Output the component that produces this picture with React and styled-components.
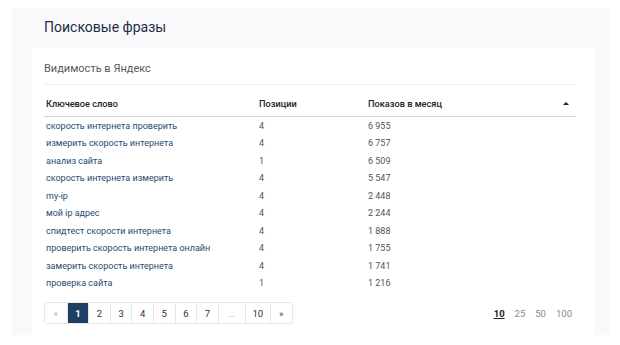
import React from "react";
import styled, { createGlobalStyle } from "styled-components";

const Global = createGlobalStyle`
  html, body { margin: 0; padding: 0; background: #ffffff; }
  body { font-family: Roboto, "Noto Sans", Arial, sans-serif; }
  * { box-sizing: border-box; }
`;

const Page = styled.div`
  width: 620px;
  height: 345px;
  padding: 8px 10px 10px 12px;
`;

const Panel = styled.div`
  background: #f9f9fb;
  height: 100%;
  display: flex;
  flex-direction: column;
`;

const Title = styled.h1`
  margin: 0;
  padding: 10px 0 0 32px;
  height: 40px;
  font-size: 14px;
  line-height: 18px;
  font-weight: 400;
  color: #1f2c44;
`;

const Card = styled.div`
  margin: 0 15px 0 20px;
  flex: 1;
  background: #ffffff;
  padding: 13px 19px 0 12px;
  display: flex;
  flex-direction: column;
`;

const Subtitle = styled.h2`
  margin: 0;
  font-size: 11px;
  line-height: 15px;
  font-weight: 400;
  color: #555b63;
  padding-bottom: 8px;
  border-bottom: 1px solid #eeeeee;
`;

const Table = styled.div`
  display: flex;
  flex-direction: column;
  margin-top: 10px;
`;

const Row = styled.div`
  display: grid;
  grid-template-columns: 213px 109px 1fr 20px;
  align-items: center;
  height: 17.5px;
  ${(p) => (p.$head ? "border-bottom: 1px solid #d6d6d6; height: 22px;" : "")}
`;

const HeadCell = styled.div`
  font-size: 9.2px;
  font-weight: 500;
  color: #222;
  padding-left: 2px;
  padding-bottom: 4px;
`;

const Cell = styled.div`
  font-size: 9px;
  color: ${(p) => (p.$link ? "#284b72" : "#555")};
  padding-left: 2px;
  white-space: nowrap;
`;

const SortArrow = styled.div`
  padding-bottom: 4px;
  display: flex;
  justify-content: center;
  &::before {
    content: "";
    border-left: 3px solid transparent;
    border-right: 3px solid transparent;
    border-bottom: 3px solid #222;
  }
`;

const Footer = styled.div`
  display: flex;
  justify-content: space-between;
  align-items: center;
  margin-top: 10px;
  padding-right: 4px;
`;

const Pager = styled.div`
  display: flex;
  border: 1px solid #e8e8e8;
  border-radius: 2px;
  height: 22px;
`;

const PageBtn = styled.div`
  width: ${(p) => p.$w || 21.6}px;
  display: flex;
  align-items: center;
  justify-content: center;
  font-size: 9.5px;
  border-left: ${(p) => (p.$first ? "none" : "1px solid #e8e8e8")};
  background: ${(p) => (p.$active ? "#1e3f66" : "#fff")};
  color: ${(p) => (p.$active ? "#fff" : p.$muted ? "#aaa" : "#333")};
  font-weight: ${(p) => (p.$active ? 700 : 400)};
`;

const Sizes = styled.div`
  display: flex;
  gap: 10px;
  font-size: 9.5px;
`;

const Size = styled.span`
  color: ${(p) => (p.$active ? "#222" : "#888")};
  font-weight: ${(p) => (p.$active ? 700 : 400)};
  text-decoration: ${(p) => (p.$active ? "underline" : "none")};
`;

const rows = [
  ["скорость интернета проверить", "4", "6 955"],
  ["измерить скорость интернета", "4", "6 757"],
  ["анализ сайта", "1", "6 509"],
  ["скорость интернета измерить", "4", "5 547"],
  ["my-ip", "4", "2 448"],
  ["мой ip адрес", "4", "2 244"],
  ["спидтест скорости интернета", "4", "1 888"],
  ["проверить скорость интернета онлайн", "4", "1 755"],
  ["замерить скорость интернета", "4", "1 741"],
  ["проверка сайта", "1", "1 216"],
];

const pages = [
  { t: "«", muted: true },
  { t: "1", active: true },
  { t: "2" },
  { t: "3" },
  { t: "4" },
  { t: "5" },
  { t: "6" },
  { t: "7" },
  { t: "…", muted: true, w: 27 },
  { t: "10", w: 25 },
  { t: "»", w: 22 },
];

export default function App() {
  return (
    <Page>
      <Global />
      <Panel>
        <Title>Поисковые фразы</Title>
        <Card>
          <Subtitle>Видимость в Яндекс</Subtitle>
          <Table>
            <Row $head>
              <HeadCell>Ключевое слово</HeadCell>
              <HeadCell>Позиции</HeadCell>
              <HeadCell>Показов в месяц</HeadCell>
              <SortArrow />
            </Row>
            {rows.map((r) => (
              <Row key={r[0]}>
                <Cell $link>{r[0]}</Cell>
                <Cell>{r[1]}</Cell>
                <Cell>{r[2]}</Cell>
                <div />
              </Row>
            ))}
          </Table>
          <Footer>
            <Pager>
              {pages.map((p, i) => (
                <PageBtn
                  key={i}
                  $first={i === 0}
                  $active={p.active}
                  $muted={p.muted}
                  $w={p.w}
                >
                  {p.t}
                </PageBtn>
              ))}
            </Pager>
            <Sizes>
              <Size $active>10</Size>
              <Size>25</Size>
              <Size>50</Size>
              <Size>100</Size>
            </Sizes>
          </Footer>
        </Card>
      </Panel>
    </Page>
  );
}
